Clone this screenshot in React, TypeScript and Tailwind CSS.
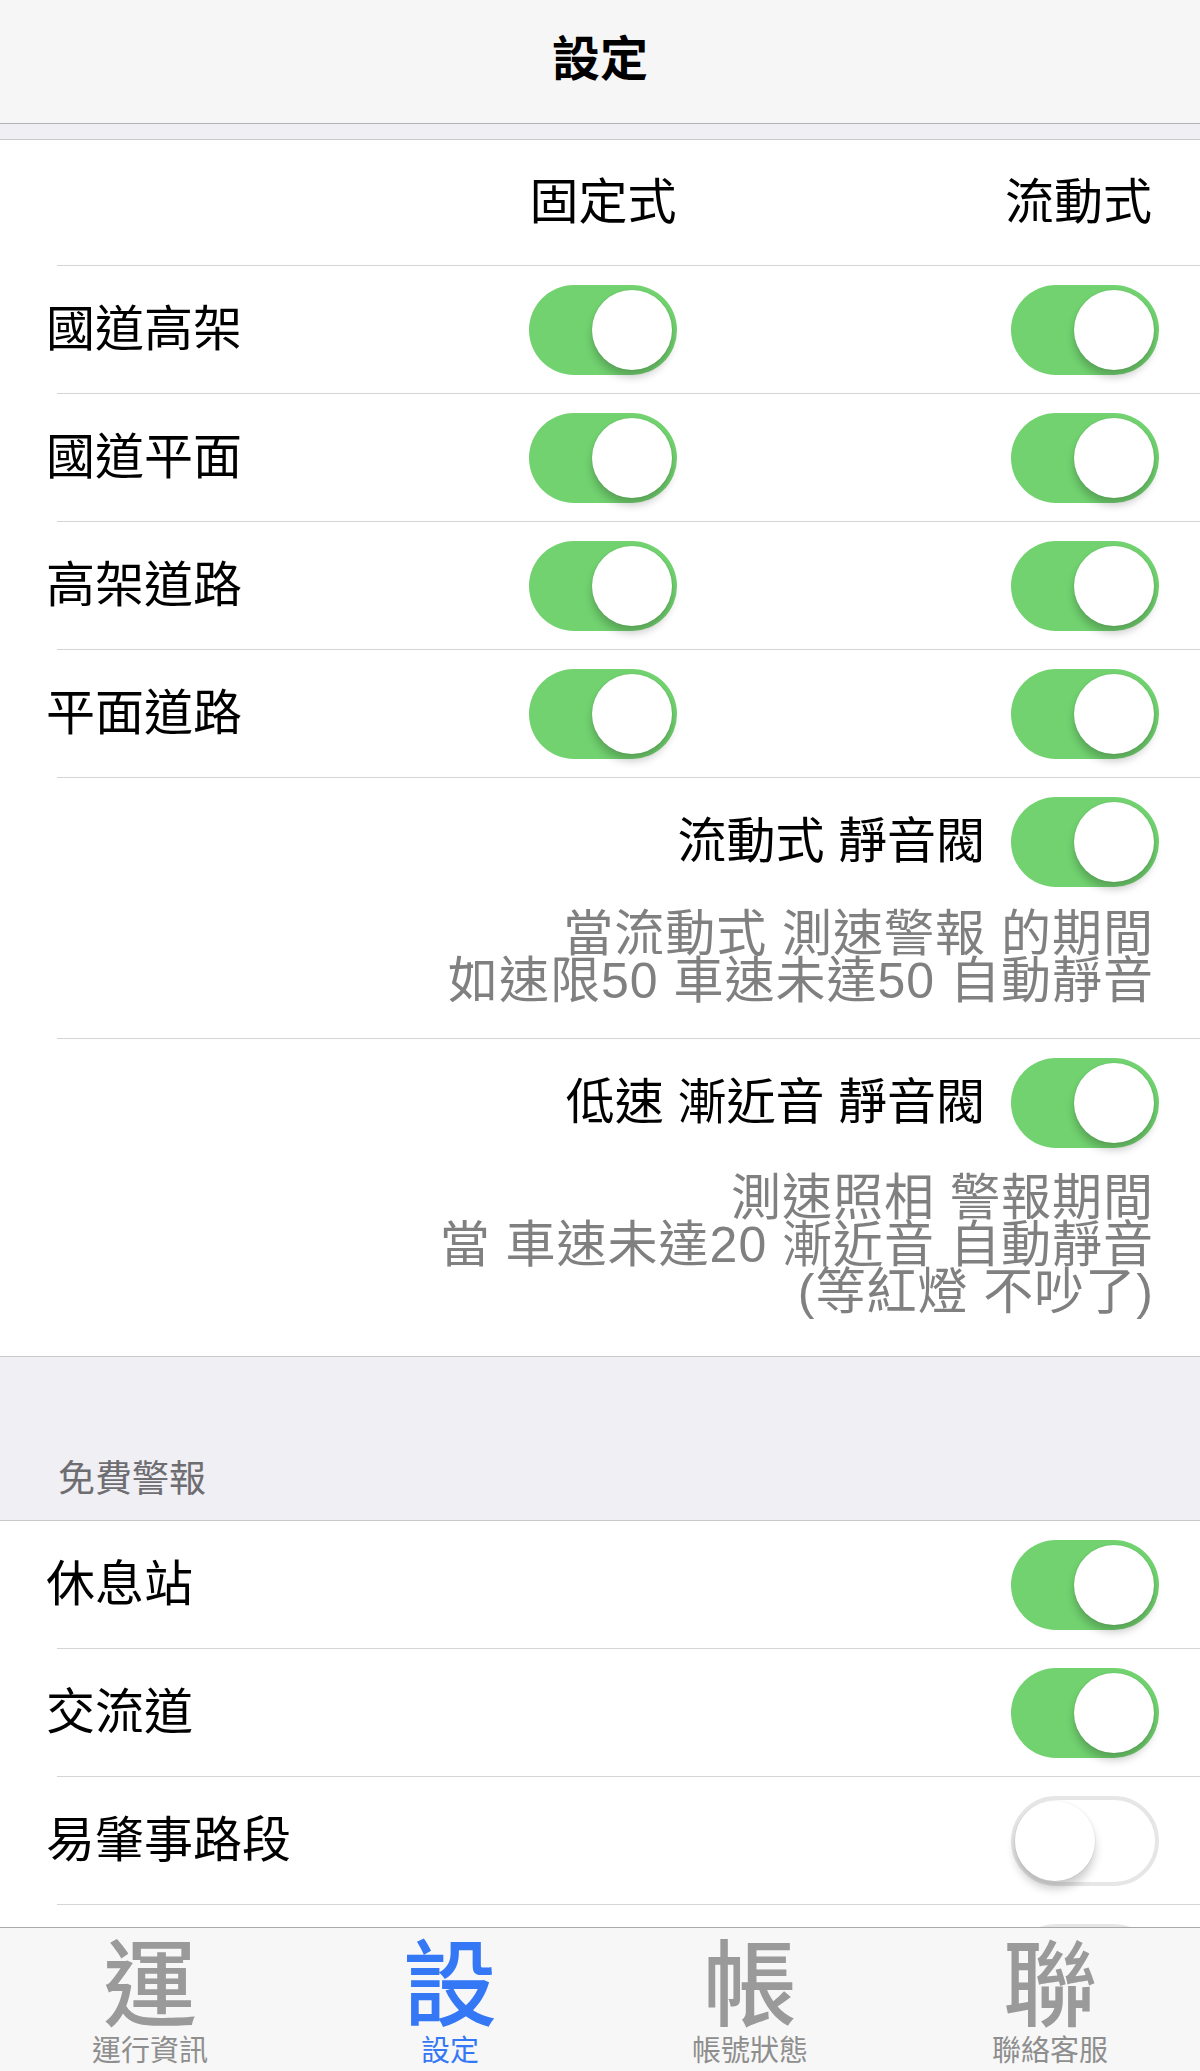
import React from "react";

const FONT = "font-['Liberation_Sans','Noto_Sans_CJK_TC',sans-serif]";

function Toggle({ on }: { on: boolean }) {
  if (on) {
    return (
      <div className="relative h-[90px] w-[148px] shrink-0 rounded-full bg-[#71d26f]">
        <div className="absolute right-[5px] top-[5px] h-[80px] w-[80px] rounded-full bg-white shadow-[0_7px_9px_rgba(0,0,0,0.22),0_0_0_1px_rgba(0,0,0,0.03)]" />
      </div>
    );
  }
  return (
    <div className="relative h-[90px] w-[148px] shrink-0 rounded-full border-[4px] border-[#e6e6e6] bg-white">
      <div className="absolute left-0 top-[1px] h-[80px] w-[80px] rounded-full bg-white shadow-[0_8px_10px_rgba(0,0,0,0.2),0_0_0_1px_rgba(0,0,0,0.04)]" />
    </div>
  );
}

function Divider() {
  return <div className="ml-[57px] h-px bg-[#d4d4d8]" />;
}

function Row({ label, fixed, mobile }: { label: string; fixed?: boolean; mobile: boolean }) {
  return (
    <div className="flex h-[127px] items-center pl-[46px] pr-[41px]">
      <span className="w-[483px] text-[49px] leading-none text-black">{label}</span>
      {fixed !== undefined && <Toggle on={fixed} />}
      <div className="flex-1" />
      <Toggle on={mobile} />
    </div>
  );
}

function MuteRow({ label, lines, top, bottom }: { label: string; lines: string[]; top: string; bottom: string }) {
  return (
    <div className="flex flex-col">
      <div className="flex h-[127px] items-center justify-end gap-[26px] pr-[41px]">
        <span className="text-[49px] leading-none text-black">{label}</span>
        <Toggle on />
      </div>
      <div className={`flex flex-col items-end pr-[46px] text-[50px] leading-[47px] tracking-[1px] text-[#808080] ${top} ${bottom}`}>
        {lines.map((l) => (
          <span key={l} className="whitespace-pre">{l}</span>
        ))}
      </div>
    </div>
  );
}

const tabs = [
  { icon: "運", label: "運行資訊", active: false },
  { icon: "設", label: "設定", active: true },
  { icon: "帳", label: "帳號狀態", active: false },
  { icon: "聯", label: "聯絡客服", active: false },
];

export default function App() {
  return (
    <div className={`flex h-[2071px] w-[1200px] flex-col overflow-hidden bg-white ${FONT}`}>
      <div className="flex-1 overflow-hidden">
        {/* nav bar */}
        <div className="flex h-[124px] items-center justify-center border-b border-[#b2b2b5] bg-[#f6f6f7] pb-[4px]">
          <span className="text-[48px] font-bold leading-none text-black">設定</span>
        </div>
        <div className="h-[16px] border-b border-[#c8c7cc] bg-[#efeff4]" />

        {/* column header */}
        <div className="flex h-[125px] items-center pl-[46px] pr-[48px]">
          <div className="w-[483px]" />
          <div className="flex w-[148px] justify-center text-[49px] leading-none text-black">固定式</div>
          <div className="flex-1" />
          <span className="text-[49px] leading-none text-black">流動式</span>
        </div>
        <Divider />
        <Row label="國道高架" fixed mobile />
        <Divider />
        <Row label="國道平面" fixed mobile />
        <Divider />
        <Row label="高架道路" fixed mobile />
        <Divider />
        <Row label="平面道路" fixed mobile />
        <Divider />
        <MuteRow
          label="流動式 靜音閥"
          lines={["當流動式 測速警報 的期間", "如速限50 車速未達50 自動靜音"]}
          top="mt-[6px]"
          bottom="pb-[33px]"
        />
        <Divider />
        <MuteRow
          label="低速 漸近音 靜音閥"
          lines={["測速照相 警報期間", "當 車速未達20 漸近音 自動靜音", "(等紅燈 不吵了)"]}
          top="mt-[9px]"
          bottom="pb-[40px]"
        />

        {/* free alerts section */}
        <div className="flex h-[165px] items-end border-y border-[#c8c7cc] bg-[#efeff4] pb-[22px] pl-[58px]">
          <span className="text-[37px] leading-none text-[#6d6d72]">免費警報</span>
        </div>
        <Row label="休息站" mobile />
        <Divider />
        <Row label="交流道" mobile />
        <Divider />
        <Row label="易肇事路段" mobile={false} />
        <Divider />
        <Row label="" mobile={false} />
      </div>

      {/* tab bar */}
      <div className="grid h-[144px] shrink-0 grid-cols-4 border-t border-[#a9a9ad] bg-[#f7f7f7]">
        {tabs.map((t) => (
          <div key={t.label} className="flex flex-col items-center pt-[12px]">
            <span className={`text-[94px] font-medium leading-none ${t.active ? "text-[#3478f6]" : "text-[#9a9a9a]"}`}>
              {t.icon}
            </span>
            <span className={`mt-[3px] text-[29px] leading-none ${t.active ? "text-[#3478f6]" : "text-[#8e8e8e]"}`}>
              {t.label}
            </span>
          </div>
        ))}
      </div>
    </div>
  );
}
